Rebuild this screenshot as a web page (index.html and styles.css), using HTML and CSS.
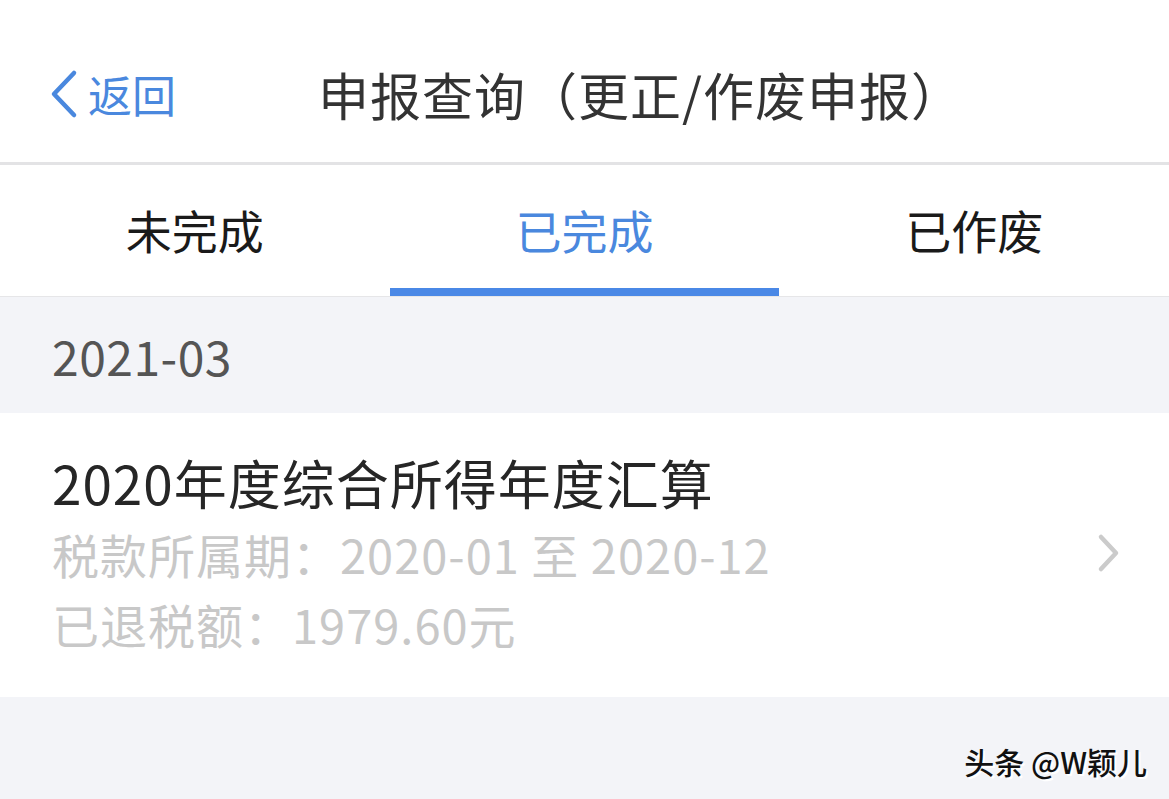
FILE: index.html
```html
<!DOCTYPE html>
<html>
<head>
    <title>申报查询</title>
    <link rel="stylesheet" href="styles.css">
</head>
<body>
    <div class="header">
        <div class="back">
            <svg class="back-icon" width="34" height="50" viewBox="0 0 34 50">
                <path d="M28 4 L8 25 L28 46" fill="none" stroke="#4a88de" stroke-width="4.5" stroke-linecap="round" stroke-linejoin="round"/>
            </svg>
            <span>返回</span>
        </div>
        <div class="title">申报查询（更正/作废申报）</div>
    </div>
    <div class="tabs">
        <div class="tab">未完成</div>
        <div class="tab active">已完成</div>
        <div class="tab">已作废</div>
    </div>
    <div class="month">2021-03</div>
    <div class="card">
        <div class="card-body">
            <div class="card-title">2020年度综合所得年度汇算</div>
            <div class="card-line">税款所属期：2020-01 至 2020-12</div>
            <div class="card-line">已退税额：1979.60元</div>
        </div>
        <svg class="arrow" width="24" height="40" viewBox="0 0 24 40">
            <path d="M4 4 L19 20 L4 36" fill="none" stroke="#cbcbcb" stroke-width="4.5" stroke-linecap="round" stroke-linejoin="round"/>
        </svg>
    </div>
    <div class="watermark">头条 @W颖儿</div>
</body>
</html>
```

FILE: styles.css
```css
body {
    margin: 0;
    padding: 0;
    background: #f3f4f8;
    font-family: "Noto Sans CJK SC", "Noto Sans", sans-serif;
    height: 799px;
    overflow: hidden;
    position: relative;
}

.header {
    height: 165px;
    box-sizing: border-box;
    background: #fff;
    border-bottom: 3px solid #e3e3e5;
    display: flex;
    align-items: center;
    padding: 26px 0 0 46px;
}

.back {
    display: flex;
    align-items: center;
    color: #4a88de;
    font-size: 44px;
    width: 272px;
}

.back-icon {
    margin-right: 8px;
}

.title {
    font-size: 51px;
    color: #333;
    letter-spacing: 1px;
}

.tabs {
    display: flex;
    height: 132px;
    box-sizing: border-box;
    background: #fff;
    border-bottom: 1px solid #e6e6e8;
}

.tab {
    flex: 1;
    display: flex;
    align-items: center;
    justify-content: center;
    font-size: 46px;
    color: #1a1a1a;
    padding-top: 4px;
    border-bottom: 8px solid transparent;
}

.tab.active {
    color: #4a88de;
    border-bottom-color: #4a88e6;
}

.month {
    height: 116px;
    line-height: 116px;
    padding-left: 52px;
    font-size: 48px;
    letter-spacing: 0.5px;
    color: #555;
}

.card {
    background: #fff;
    height: 284px;
    box-sizing: border-box;
    padding: 32px 48px 0 52px;
    display: flex;
    align-items: flex-start;
}

.card-body {
    flex: 1;
}

.card-title {
    font-size: 53px;
    line-height: 74px;
    letter-spacing: 1px;
    color: #262626;
}

.card-line {
    font-size: 47px;
    line-height: 70px;
    letter-spacing: 1px;
    color: #c8c8c8;
}

.arrow {
    margin-top: 88px;
}

.watermark {
    position: absolute;
    right: 22px;
    bottom: 16px;
    font-size: 30px;
    font-weight: 500;
    color: #111;
    text-shadow: 2px 2px 0 #fff;
}
```
